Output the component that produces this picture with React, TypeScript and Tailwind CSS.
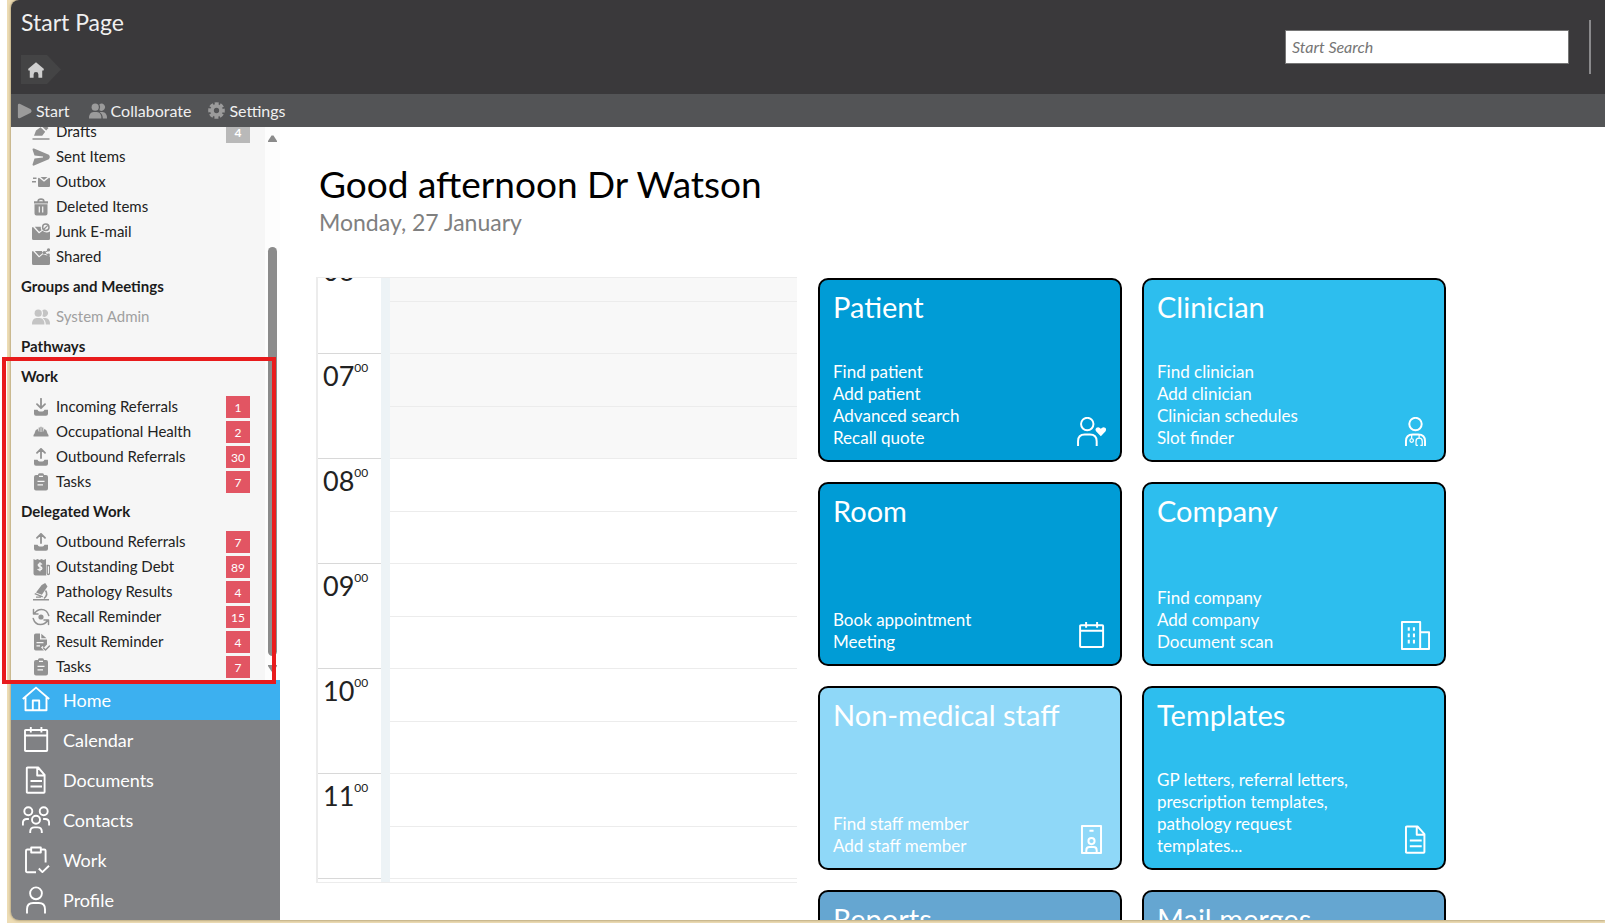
import type { ReactNode } from 'react'

interface IconProps {
  className?: string
}

type Icon = (props: IconProps) => ReactNode

/* ---------- Line icons (navigation and tiles) ---------- */

const line = {
  viewBox: '0 0 28 28',
  fill: 'none',
  stroke: 'currentColor',
  strokeWidth: 1.9,
  strokeLinejoin: 'round' as const,
}

const HomeLine: Icon = ({ className }) => (
  <svg {...line} className={className}>
    <path d="M.8 13 14 1.6 27.2 13M3.5 11v13.2h21V11M10.8 24V14.5h6.4V24" />
  </svg>
)

const CalendarLine: Icon = ({ className }) => (
  <svg {...line} className={className}>
    <path d="M3.8 4h20.6q.8 0 .8.8v19.4q0 .8-.8.8H3.8q-.8 0-.8-.8V4.8q0-.8.8-.8zM3 9.5h22.2M8.8 1v5.5M19.4 1v5.5" />
  </svg>
)

const DocumentLine: Icon = ({ className }) => (
  <svg {...line} className={className}>
    <path d="M5.6 1.5h10.6l6.4 7.3v17.2q0 .8-.8.8H5.6q-.8 0-.8-.8V2.3q0-.8.8-.8zM15.2 1.5v8h7.4M8.5 15h11.5M8.5 20.5h11.5" />
  </svg>
)

const ContactsLine: Icon = ({ className }) => (
  <svg {...line} className={className}>
    <circle cx="6.3" cy="5.2" r="4" />
    <circle cx="21.7" cy="5.2" r="4" />
    <circle cx="14" cy="13.8" r="4" />
    <path d="M.9 19.5V17q0-4 4-4h2M27.1 19.5V17q0-4-4-4h-2M8.2 27v-1.3q0-4.3 4.3-4.3h3q4.3 0 4.3 4.3V27" />
  </svg>
)

const ClipboardLine: Icon = ({ className }) => (
  <svg {...line} className={className}>
    <path d="M14 26.2H5.3q-1.3 0-1.3-1.3V4.8q0-1.3 1.3-1.3H9M19 3.5h3.3q1.3 0 1.3 1.3v11.7M9.2 1.5h9.6v5H9.2zM16.8 22.5l3.6 3.6 6.6-6.4" />
  </svg>
)

const ProfileLine: Icon = ({ className }) => (
  <svg {...line} className={className}>
    <circle cx="14" cy="7.3" r="5.9" />
    <path d="M5 27.5v-4.3q0-6.2 6.2-6.2h5.6q6.2 0 6.2 6.2v4.3" />
  </svg>
)

const PatientLine: Icon = ({ className }) => (
  <svg {...line} className={className}>
    <circle cx="9.9" cy="6.8" r="6" />
    <path d="M1 28v-4.5q0-6.500 6.500-6.500h5q6.500 0 6.500 6.500V28" />
    <path
      d="M23 18.5 18.6 14q-1.6-2.2.2-3.7 2.3-1.3 4.2 1 1.9-2.3 4.2-1 1.8 1.5.2 3.7z"
      fill="currentColor"
      stroke="none"
    />
  </svg>
)

const ClinicianLine: Icon = ({ className }) => (
  <svg {...line} className={className}>
    <circle cx="14" cy="6.8" r="6" />
    <path d="M4.8 28v-4.5q0-6.500 6.500-6.500h5.4q6.500 0 6.500 6.500V28" />
    <path d="M10.3 17v4M17.5 17v3.5M14.5 27.5V23.5q0-3 3-3t3 3v4h-1.8M14.5 27.5h1.8" strokeWidth="1.2" />
    <circle cx="10.3" cy="22.7" r="1.7" strokeWidth="1.2" />
  </svg>
)

const CompanyLine: Icon = ({ className }) => (
  <svg {...line} className={className}>
    <path d="M.9 1h17.6v26H.9zM18.5 10.8h8.6V27H.9" />
    <path d="M7.500 6v16M12.500 6v16" strokeWidth="2" strokeDasharray="3.5 2.6" />
  </svg>
)

const BadgeLine: Icon = ({ className }) => (
  <svg {...line} className={className}>
    <path d="M4.8 1h18.4v26H4.8zM12 5.5h4" />
    <circle cx="14" cy="15.5" r="3" />
    <path d="M9 27v-2.7q0-3 3-3h4q3 0 3 3V27" />
  </svg>
)

/* ---------- Solid icons (mail tree and toolbar) ---------- */

const solid = { viewBox: '0 0 18 18', fill: 'currentColor' }

const stroked = {
  fill: 'none',
  stroke: 'currentColor',
  strokeWidth: 1.8,
  strokeLinecap: 'round' as const,
  strokeLinejoin: 'round' as const,
}

const PlaySolid: Icon = ({ className }) => (
  <svg {...solid} className={className}>
    <path d="M1 2.2Q1 .4 3 .9L15.5 7q2 2 0 4L3 17.1Q1 17.6 1 15.8z" />
  </svg>
)

const PeopleSolid: Icon = ({ className }) => (
  <svg {...solid} className={className}>
    <circle cx="6.2" cy="5.2" r="3.6" />
    <path d="M10.4 2.2a3.6 3.6 0 1 1 0 6q1.5-3 0-6zM0 16.5q0-6.5 4.5-6.5h3.4q4.5 0 4.5 6.5zM10.5 10h3q4.5 0 4.5 6.500h-4.200Q13.800 12 10.500 10z" />
  </svg>
)

const GearSolid: Icon = ({ className }) => (
  <svg {...solid} className={className}>
    <circle cx="9" cy="9" r="4.8" fill="none" stroke="currentColor" strokeWidth="4" />
    <circle cx="9" cy="9" r="7.2" fill="none" stroke="currentColor" strokeWidth="3.2" strokeDasharray="4 1.65" strokeDashoffset="2" />
  </svg>
)

const HouseSolid: Icon = ({ className }) => (
  <svg {...solid} className={className}>
    <path d="M9 .3 18 8l-1 2-1-.7V17.700h-4.300V14a2.700 2.700 0 0 0-5.400 0v3.700H2V9.300L1 10 0 8z" />
  </svg>
)

const DraftsSolid: Icon = ({ className }) => (
  <svg {...solid} className={className}>
    <path d="M2 12.8 4 7.5l4.5-3.300 4.700 4.500-3 4.100zM9.800 3.300 12.300 1l4.200 4-2.300 2.500zM.5 15.200h17v1.600H.5z" />
  </svg>
)

const SendSolid: Icon = ({ className }) => (
  <svg {...solid} className={className}>
    <path d="M.5 1.500Q.5 0 2 .5L16.800 6.800q2 2.200 0 4.400L2 17.500Q.5 18 .5 16.500L2.500 10.400 11 9.600V8.400L2.500 7.600z" />
  </svg>
)

const OutboxSolid: Icon = ({ className }) => (
  <svg {...solid} className={className}>
    <path d="M6 5.800q0-1 1-1l5 4 5-4q1 0 1 1v7.200q0 1-1 1H7q-1 0-1-1z" />
    <path d="M8.500 4h7L12 7zM1 4.500h3.500V6H1zM0 8h4v1.500H0z" />
  </svg>
)

const TrashSolid: Icon = ({ className }) => (
  <svg {...solid} className={className}>
    <path
      fillRule="evenodd"
      d="M5.300 3.200Q5.300.3 9 .3t3.700 2.900H16v2.300H2V3.200zm1.700 0h4Q11 1.900 9 1.900T7 3.200zM2.500 6.200h13v9.300q0 2-2 2h-9q-2 0-2-2zM6.700 8.500v6h1.200v-6zm3.400 0v6h1.200v-6z"
    />
  </svg>
)

const JunkSolid: Icon = ({ className }) => (
  <svg {...solid} className={className}>
    <path d="M0 5q0-1 1-1l6 6.500 3.500-2.700q3.500 3 7.500.7v7q0 1.500-1.500 1.500h-15Q0 17 0 15.500zM2.800 3.800h6q-.3 2 .7 3.400L7.200 8.800z" />
    <circle cx="13.800" cy="4.300" r="3.200" fill="none" stroke="currentColor" strokeWidth="1.500" />
    <path d="m11.800 6.200 4-3.800" stroke="currentColor" strokeWidth="1.300" />
  </svg>
)

const SharedSolid: Icon = ({ className }) => (
  <svg {...solid} className={className}>
    <path d="M0 4q0-1 1-1l6 6.500 4-3.300 7 2.300v7q0 1.500-1.500 1.500h-15Q0 17 0 15.500zM2.800 3h7l1 2-3.600 3z" />
    <path d="m17 2-5 2.800 5 2.500" fill="none" stroke="currentColor" />
    <circle cx="16.500" cy="1.900" r="1.600" />
    <circle cx="12.200" cy="4.600" r="1.600" />
    <circle cx="16.500" cy="7" r="1.400" />
  </svg>
)

const Tray = () => <path d="M2 11.800h3.500q.6 1.700 2 1.700h3q1.400 0 2-1.700H16v4q0 2-2 2H4q-2 0-2-2z" />

const IncomingSolid: Icon = ({ className }) => (
  <svg {...solid} className={className}>
    <Tray />
    <path d="M9 .8v9M5 6.200l4 4 4-4" {...stroked} />
  </svg>
)

const OutgoingSolid: Icon = ({ className }) => (
  <svg {...solid} className={className}>
    <Tray />
    <path d="M9 10V1M5 4.800l4-4 4 4" {...stroked} />
  </svg>
)

const HelmetSolid: Icon = ({ className }) => (
  <svg {...solid} className={className}>
    <path d="M2.500 10.500q.5-3.500 3-4.700L6.700 9V4.500h1.100V9h.6V3.800h1.200V9h.6V4.500h1.100V9l1.200-3.200q2.500 1.200 3 4.700l1 1.500v1.500h-15V12z" />
  </svg>
)

const TasksSolid: Icon = ({ className }) => (
  <svg {...solid} className={className}>
    <path
      fillRule="evenodd"
      d="M6 2q0-1.700 1.500-1.700h3Q12 .3 12 2h2q2 0 2 2v11.500q0 2-2 2H4q-2 0-2-2V4q0-2 2-2zm1 .8V4h4V2.800zM5.500 7.800V9h7V7.800zm0 3.400v1.200h5.500v-1.200z"
    />
  </svg>
)

const DebtSolid: Icon = ({ className }) => (
  <svg {...solid} className={className}>
    <path d="M1.500 1l2 1 2-1 2 1 2-1 2 1 2.500-1v15.500q0 .5.500 1H3.500q-2 0-2-2z" />
    <path d="M15.200 7.500h1.500q1 0 1 1v6.200q0 1.800-1.300 1.800t-1.200-1.500z" fill="none" stroke="currentColor" strokeWidth="1.300" />
    <path d="M10 6.500q-.6-.9-2-.9T6.200 7q0 1.300 1.800 1.600t1.900 1.700T8 11.900t-2.100-1M8 4.300v9" fill="none" stroke="#f6f6f6" strokeWidth="1.300" />
  </svg>
)

const MicroscopeSolid: Icon = ({ className }) => (
  <svg {...solid} className={className}>
    <path d="M9.700 2 13.200 0l2.300 3.400-5.600 8.400-5.900-2.300zM3 9.900l8 3.300-.5 1.300-8-3.300zM1 15.900h16v1.700H1zM4 13.500h5v1.200H4z" />
    <path d="M13.500 7.500q3 4-1.500 8" fill="none" stroke="currentColor" strokeWidth="1.600" />
  </svg>
)

const RecallSolid: Icon = ({ className }) => (
  <svg {...solid} className={className}>
    <circle cx="9" cy="9" r="2.600" />
    <path d="M1.500 6V1.500M1.500 6H6M16.500 12v4.500M16.500 12H12M2.500 5.500q2.500-4 7-4 5.500 0 7.300 6M15.500 12.500q-2.500 4-7 4Q3 16.500 1.200 10.500" {...stroked} strokeWidth={1.5} />
  </svg>
)

const ResultSolid: Icon = ({ className }) => (
  <svg {...solid} className={className}>
    <path
      fillRule="evenodd"
      d="M2 2.300Q2 .5 3.800.5H8v6h7v5l-3 3-1.500-1.500-1.500 1.500 3 3H3.800Q2 17.500 2 15.700zM4.500 9v1.300h7V9zm0 3.300v1.300H8v-1.300zM9.300.8 14.500 5.300H9.300z"
    />
    <path d="m11.500 15 2 2 4-4" {...stroked} strokeWidth={1.5} />
  </svg>
)

/* ---------- Data ---------- */

interface Folder {
  label: string
  icon: Icon
  count?: number
  muted?: boolean
}

interface Group {
  title?: string
  items: Folder[]
}

const groups: Group[] = [
  {
    items: [
      { label: 'Drafts', icon: DraftsSolid, count: 4, muted: true },
      { label: 'Sent Items', icon: SendSolid },
      { label: 'Outbox', icon: OutboxSolid },
      { label: 'Deleted Items', icon: TrashSolid },
      { label: 'Junk E-mail', icon: JunkSolid },
      { label: 'Shared', icon: SharedSolid },
    ],
  },
  { title: 'Groups and Meetings', items: [{ label: 'System Admin', icon: PeopleSolid, muted: true }] },
  { title: 'Pathways', items: [] },
  {
    title: 'Work',
    items: [
      { label: 'Incoming Referrals', icon: IncomingSolid, count: 1 },
      { label: 'Occupational Health', icon: HelmetSolid, count: 2 },
      { label: 'Outbound Referrals', icon: OutgoingSolid, count: 30 },
      { label: 'Tasks', icon: TasksSolid, count: 7 },
    ],
  },
  {
    title: 'Delegated Work',
    items: [
      { label: 'Outbound Referrals', icon: OutgoingSolid, count: 7 },
      { label: 'Outstanding Debt', icon: DebtSolid, count: 89 },
      { label: 'Pathology Results', icon: MicroscopeSolid, count: 4 },
      { label: 'Recall Reminder', icon: RecallSolid, count: 15 },
      { label: 'Result Reminder', icon: ResultSolid, count: 4 },
      { label: 'Tasks', icon: TasksSolid, count: 7 },
    ],
  },
]

const navItems: { label: string; icon: Icon }[] = [
  { label: 'Home', icon: HomeLine },
  { label: 'Calendar', icon: CalendarLine },
  { label: 'Documents', icon: DocumentLine },
  { label: 'Contacts', icon: ContactsLine },
  { label: 'Work', icon: ClipboardLine },
  { label: 'Profile', icon: ProfileLine },
]

const tiles: { title: string; color: string; icon: Icon; links: string[]; text?: string }[] = [
  { title: 'Patient', color: 'bg-[#009cd6]', icon: PatientLine, links: ['Find patient', 'Add patient', 'Advanced search', 'Recall quote'] },
  { title: 'Clinician', color: 'bg-[#2dbeee]', icon: ClinicianLine, links: ['Find clinician', 'Add clinician', 'Clinician schedules', 'Slot finder'] },
  { title: 'Room', color: 'bg-[#009cd6]', icon: CalendarLine, links: ['Book appointment', 'Meeting'] },
  { title: 'Company', color: 'bg-[#2dbeee]', icon: CompanyLine, links: ['Find company', 'Add company', 'Document scan'] },
  { title: 'Non-medical staff', color: 'bg-[#8fd8f8]', icon: BadgeLine, links: ['Find staff member', 'Add staff member'] },
  { title: 'Templates', color: 'bg-[#2dbeee]', icon: DocumentLine, links: [], text: 'GP letters, referral letters, prescription templates, pathology request templates...' },
  { title: 'Reports', color: 'bg-[#65a6d1]', icon: DocumentLine, links: [] },
  { title: 'Mail merges', color: 'bg-[#65a6d1]', icon: DocumentLine, links: [] },
]

const hours = ['06', '07', '08', '09', '10', '11', '12']

/* ---------- Sections ---------- */

function Header() {
  return (
    <header className="shrink-0 rounded-tl-lg bg-[#3a393b] text-white">
      <div className="flex h-[94px] justify-between">
        <div className="pl-[10px] pt-[7px]">
          <h1 className="text-[23px] leading-[30px] text-[#f0f0f0]">Start Page</h1>
          <button aria-label="Home" className="mt-[18px] flex h-[29px] items-center">
            <span className="flex h-full w-[26px] items-center justify-end bg-[#444445] text-[#cfcfcf]">
              <HouseSolid className="mr-[3px] size-4" />
            </span>
            <svg viewBox="0 0 14 29" className="h-[29px] w-[14px] fill-[#444445]">
              <path d="M0 0 14 14.500 0 29z" />
            </svg>
          </button>
        </div>
        <div className="flex items-start pr-[14px]">
          <input
            type="text"
            aria-label="Start Search"
            placeholder="Start Search"
            className="mt-[30px] h-[34px] w-[284px] border border-[#767676] bg-white px-[6px] pb-[2px] text-base text-black placeholder:italic placeholder:text-[#757575]"
          />
          <div className="ml-5 mt-5 h-[54px] w-[2px] bg-[#8a8a8c]" />
        </div>
      </div>
      <div className="flex h-[33px] items-center bg-[#535456] pl-[6px] text-base text-[#f0f0f0]">
        <button className="mr-[19px] flex items-center gap-[3px]">
          <PlaySolid className="size-4 text-[#9b9b9b]" />
          Start
        </button>
        <button className="mr-[17px] flex items-center gap-1">
          <PeopleSolid className="size-[18px] text-[#9b9b9b]" />
          Collaborate
        </button>
        <button className="flex items-center gap-1">
          <GearSolid className="size-[17px] text-[#9b9b9b]" />
          Settings
        </button>
      </div>
    </header>
  )
}

function FolderRow({ label, icon: FolderIcon, count, muted }: Folder) {
  const faded = muted && !count
  return (
    <li className="flex h-[25px] items-center pl-[21px] pr-[15px]">
      <FolderIcon className={faded ? 'size-[18px] text-[#c4c4c4]' : 'size-[18px] text-[#929292]'} />
      <a href="#" className={faded ? 'ml-[6px] text-[#a0a0a0]' : 'ml-[6px] text-[#222]'}>{label}</a>
      {count && (
        <span
          className={`ml-auto h-[22px] w-6 text-center text-xs leading-[23px] text-white ${
            muted ? 'bg-[#b9b9b9] font-bold' : 'bg-[#e25563]'
          }`}
        >
          {count}
        </span>
      )}
    </li>
  )
}

function FolderTree() {
  return (
    <div className="relative flex min-h-0 flex-1">
      <div className="flex min-w-0 flex-1 flex-col justify-end overflow-hidden bg-[#f6f6f6] pb-px text-[15px] leading-[25px]">
        <div>
          {groups.map((group, i) => (
            <section key={i}>
              {group.title && <h2 className="my-[5px] pl-[10px] font-bold text-[#1c1c1c]">{group.title}</h2>}
              <ul>
                {group.items.map(item => <FolderRow key={item.label} {...item} />)}
              </ul>
            </section>
          ))}
        </div>
      </div>

      {/* Scroll bar */}
      <div className="flex w-[15px] flex-col items-center bg-[#fdfdfd] py-2">
        <svg viewBox="0 0 9 7" className="h-[7px] w-[9px] fill-[#8b8b8b]"><path d="M3.500.5h2L9 6v1H0V6z" /></svg>
        <div className="mb-[9px] mt-[105px] w-[9px] flex-1 rounded-full bg-[#8b8b8b]" />
        <svg viewBox="0 0 9 7" className="h-[7px] w-[9px] fill-[#8b8b8b]"><path d="M3.500 6.500h2L9 1V0H0v1z" /></svg>
      </div>

      {/* Highlight around the work queues */}
      <div className="pointer-events-none absolute -bottom-1 -left-[9px] right-1 z-10 h-[327px] border-4 border-[#e81b1c]" />
    </div>
  )
}

function Navigation() {
  return (
    <nav className="shrink-0 overflow-hidden rounded-bl-lg bg-[#808184] text-lg text-white">
      {navItems.map(({ label, icon: NavIcon }, i) => (
        <a key={label} href="#" className={`flex h-10 items-center gap-[13px] pl-[11px] ${i === 0 ? 'bg-[#3cb0f0]' : ''}`}>
          <NavIcon className="size-7" />
          {label}
        </a>
      ))}
    </nav>
  )
}

function DayPlanner() {
  return (
    <div className="h-[606px] w-[481px] shrink-0 overflow-hidden border-y border-l-2 border-y-[#ececec] border-l-[#ececec]">
      {/* Scrolled part-way into the 06:00 slot */}
      <div className="-mt-[29px]">
        {hours.map((hour, i) => (
          <div key={hour} className="flex h-[105px]">
            <div className="flex w-[63px] items-start border-b border-[#d8d8d8] pl-[5px] text-[#222]">
              <span className="mt-1 text-[27px] leading-9">{hour}</span>
              <span className="mt-[6px] text-xs leading-4">00</span>
            </div>
            <div className="w-[9px] bg-[#edf3f6]" />
            <div className={`flex-1 ${i < 2 ? 'bg-[#f8f8f8]' : 'bg-white'}`}>
              <div className="h-[53px] border-b border-[#ececec]" />
              <div className="h-[52px] border-b border-[#ececec]" />
            </div>
          </div>
        ))}
      </div>
    </div>
  )
}

function Tiles() {
  return (
    <div className="mt-px grid grid-cols-[304px_304px] content-start gap-5">
      {tiles.map(({ title, color, icon: TileIcon, links, text }) => (
        <section key={title} className={`flex h-[184px] flex-col justify-between rounded-[10px] border-2 border-black pb-[11px] pl-[13px] pr-[14px] pt-[9px] text-white ${color}`}>
          <h3 className="text-[29px] leading-9">{title}</h3>
          <div className="flex items-end justify-between">
            <div className="w-[210px] text-[17px] leading-[22px]">
              {links.map(link => <a key={link} href="#" className="block">{link}</a>)}
              {text && <p>{text}</p>}
            </div>
            <TileIcon className="mb-[3px] size-[29px]" />
          </div>
        </section>
      ))}
    </div>
  )
}

export default function App() {
  return (
    <div className="flex h-screen overflow-hidden bg-white font-[Lato,'Liberation_Sans',sans-serif]">
      <div className="ml-[7px] flex min-w-0 flex-1 bg-[#eddcb4] pb-[3px] pl-1">
        <div className="flex min-w-0 flex-1 flex-col rounded-l-lg shadow-[0_0_3px_#8a7a50]">
          <Header />
          <div className="flex min-h-0 flex-1">
            <aside className="flex w-[269px] shrink-0 flex-col">
              <FolderTree />
              <Navigation />
            </aside>
            <main className="min-w-0 flex-1 overflow-hidden bg-white pl-9 pt-[34px]">
              <h2 className="pl-[3px] text-[37px] leading-[46px] text-black">Good afternoon Dr Watson</h2>
              <p className="pl-[3px] pt-px text-[23px] leading-7 text-[#808080]">Monday, 27 January</p>
              <div className="mt-[41px] flex gap-[21px]">
                <DayPlanner />
                <Tiles />
              </div>
            </main>
          </div>
        </div>
      </div>
    </div>
  )
}
